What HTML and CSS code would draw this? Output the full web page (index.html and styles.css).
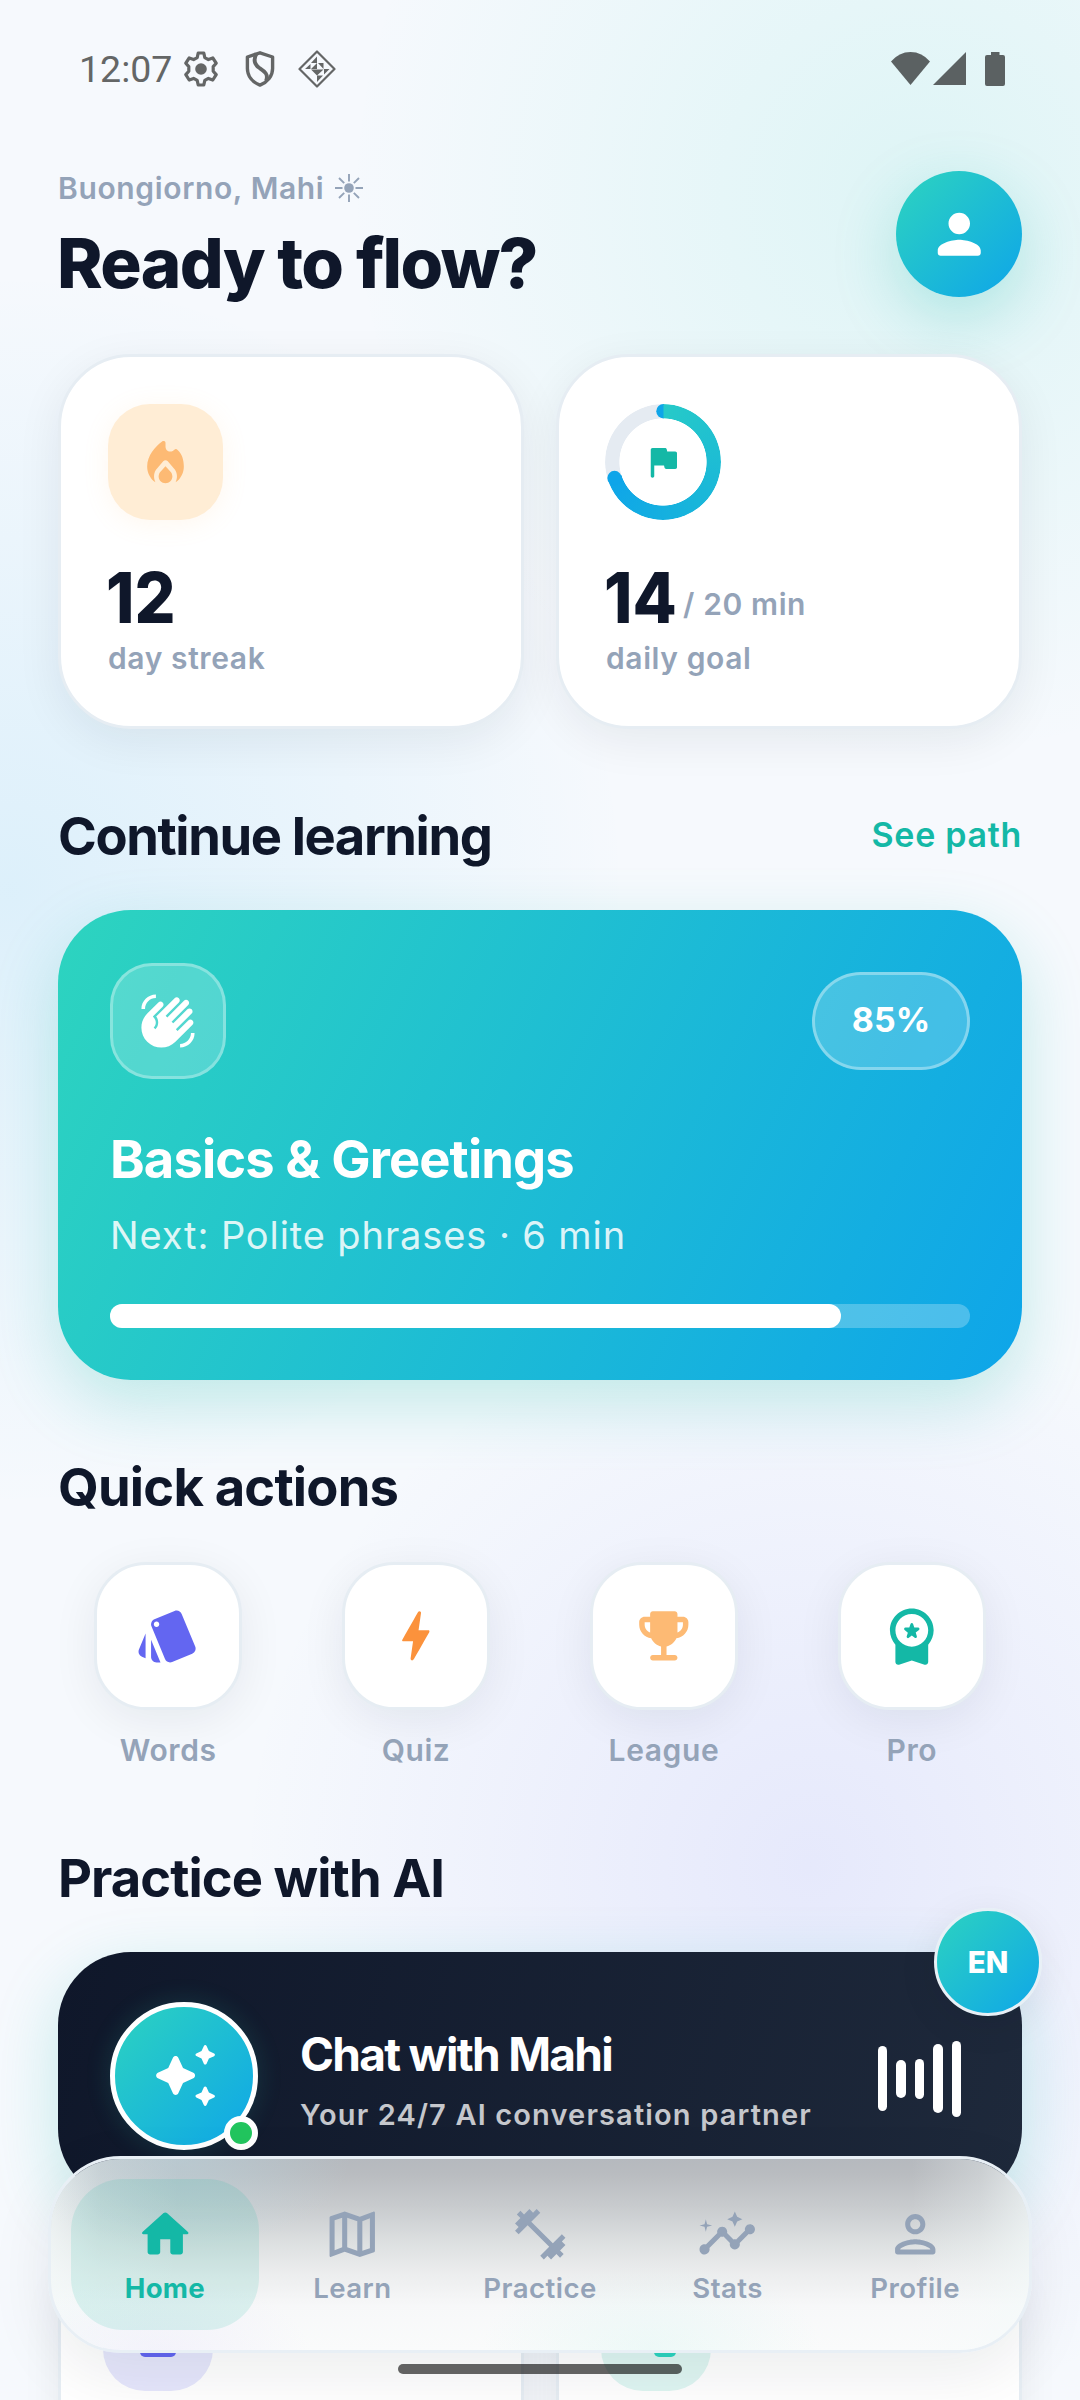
FILE: index.html
```html
<!DOCTYPE html>
<html lang="en">
<head>
<meta charset="utf-8">
<title>Home</title>
<link rel="stylesheet" href="styles.css">
</head>
<body>
<div class="screen">
  <header class="status">
    <span class="clock">12:07</span>
    <svg class="st-gear" viewBox="0 0 34 36"><path d="M14.2 2h5.6l1 4.600 3.600 2 4.400-1.600 3.400 5.200-3 3.400v4.600l3 3.400-3.400 5.400-4.400-1.600-3.600 2-1 4.600h-5.600l-1-4.600-3.600-2-4.400 1.600-3.400-5.400 3-3.400v-4.600l-3-3.400 3.400-5.200 4.400 1.600 3.600-2z" fill="none" stroke="#646666" stroke-width="3.200" stroke-linejoin="round"/><circle cx="17" cy="18" r="5.800" fill="#646666"/></svg>
    <svg class="st-shield" viewBox="0 0 30 36"><path d="M15 1.800 27.600 6v11.500c0 7.500-5 13.600-12.600 16.600C7.400 31.100 2.400 25 2.400 17.500V6z" fill="none" stroke="#646666" stroke-width="3.400" stroke-linejoin="round"/><path d="M11.500 2.500C8 9 10 14 14.500 17s9.500 6 6.500 13" fill="none" stroke="#646666" stroke-width="3.800"/></svg>
    <svg class="st-diamond" viewBox="0 0 38 38"><path d="M19 1.500 36.500 19 19 36.500 1.500 19z" fill="none" stroke="#646666" stroke-width="2.200" stroke-linejoin="round"/><g fill="#646666"><path d="M19 6.500V13h-6zM20 13h5.500v6zM19 13v6l-6 0zM12.500 14v5H7zM13 19.500h6v6zM19 19.500h6.500l-6.500 6zM26 19h5.500l-5.500 5.500zM19 25.500h6l-6 6.500z"/></g></svg>
    <span class="grow"></span>
    <svg class="st-wifi" viewBox="0 0 39 33"><path d="M0 9.500Q8 0 19.500 0T39 9.500L19.500 33z" fill="#5b6162"/></svg>
    <svg class="st-signal" viewBox="0 0 33 33"><path d="M0 33 33 0v33z" fill="#5b6162"/></svg>
    <svg class="st-battery" viewBox="0 0 20 34"><path d="M6 0h8.500v3H18q2 0 2 2v27q0 2-2 2H2q-2 0-2-2V5q0-2 2-2h4z" fill="#5b6162"/></svg>
  </header>

  <main class="content">
    <section class="hello">
      <div>
        <p class="greeting">Buongiorno, Mahi<svg class="sun" viewBox="0 0 28 28"><circle cx="14" cy="14" r="4.800" fill="#94a3b8"/><path d="M14 0v7.500M14 20.500V28M0 14h7.500M20.500 14H28M4 4l5.200 5.200M18.800 18.800 24 24M4 24l5.200-5.200M18.800 9.200 24 4" stroke="#94a3b8" stroke-width="1.900"/></svg></p>
        <h1>Ready to flow?</h1>
      </div>
      <div class="avatar"><svg viewBox="0 0 24 24"><path d="M12 12c2.210 0 4-1.790 4-4s-1.790-4-4-4-4 1.790-4 4 1.790 4 4 4zm0 2c-2.670 0-8 1.340-8 4v1c0 .55.45 1 1 1h14c.55 0 1-.45 1-1v-1c0-2.660-5.330-4-8-4z"/></svg></div>
    </section>

    <section class="stats">
      <article class="stat">
        <div class="flame"><svg viewBox="0 0 24 24"><path d="M16 6.300c-.5.500-1.100.900-2 .900-1.100 0-2-.9-2-2.200V3.400c0-.8-.9-1-1.500-.6C7.600 4.900 4 9 4 13.700c0 2.800 1.400 5.500 3.600 6.900-.4-.8-.6-1.700-.6-2.600 0-1.400.5-2.600 1.500-3.600l2.500-2.900c.6-.6 1.400-.6 2 0l2.500 2.900c1 1 1.500 2.200 1.500 3.600 0 .9-.2 1.800-.6 2.600 2.200-1.400 3.600-4.100 3.600-6.900 0-2.800-.8-5.300-2.600-7-.5-.7-1.100-.8-1.400-.4z"/><path d="M12 13.600l-2.100 2.300c-.6.600-.9 1.400-.9 2.200C9 19.700 10.300 21 12 21s3-1.300 3-2.900c0-.8-.3-1.600-.9-2.200z"/></svg></div>
        <p class="num"><b>12</b></p>
        <p class="label">day streak</p>
      </article>
      <article class="stat">
        <div class="ring">
          <svg class="caps" viewBox="0 0 116 116"><path d="M58.500 0a7.200 7.200 0 0 0 0 14.400z" fill="#0ea5e9"/><circle cx="9.500" cy="74" r="7.200" fill="#0ea5e9"/></svg>
          <svg class="flag" viewBox="0 0 24 24"><path d="M14.400 6l-.24-1.200c-.09-.46-.5-.8-.98-.8H6c-.55 0-1 .45-1 1v15c0 .55.45 1 1 1s1-.45 1-1v-6h5.600l.24 1.200c.09.47.5.8.98.8H19c.55 0 1-.45 1-1V7c0-.55-.45-1-1-1h-4.600z"/></svg>
        </div>
        <p class="num"><b>14</b><span>/ 20 min</span></p>
        <p class="label">daily goal</p>
      </article>
    </section>

    <div class="heading first"><h2 class="h-continue">Continue learning</h2><a class="link">See path</a></div>
    <section class="lesson">
      <div class="lesson-top">
        <div class="glass"><svg viewBox="0 0 24 24"><path d="M23 17c0 3.310-2.690 6-6 6v-1.500c2.480 0 4.500-2.020 4.500-4.500H23zM1 7c0-3.310 2.690-6 6-6v1.500C4.520 2.500 2.500 4.520 2.500 7H1zM8.010 4.320l-4.600 4.600c-3.220 3.220-3.220 8.450 0 11.670s8.450 3.220 11.670 0l7.070-7.070c.49-.49.49-1.280 0-1.770s-1.280-.49-1.770 0l-4.420 4.420-.71-.71 6.540-6.540c.49-.49.49-1.280 0-1.770s-1.280-.49-1.770 0l-5.830 5.830-.71-.71 6.890-6.890c.49-.49.49-1.280 0-1.770s-1.280-.49-1.770 0L11.710 10.500l-.69-.7 5.480-5.480c.49-.49.49-1.280 0-1.770s-1.280-.49-1.770 0l-7.620 7.620c1.220 1.570 1.110 3.840-.33 5.280l-.71-.71c1.170-1.170 1.170-3.070 0-4.240l-.35-.35 4.070-4.070c.49-.49.49-1.280 0-1.770-.5-.48-1.290-.48-1.780.01z"/></svg></div>
        <span class="percent">85%</span>
      </div>
      <h3>Basics &amp; Greetings</h3>
      <p class="next">Next: Polite phrases · 6 min</p>
      <div class="bar"><div class="fill" style="width:85%"></div></div>
    </section>

    <div class="heading quick"><h2 class="h-quick">Quick actions</h2></div>
    <section class="actions">
      <div class="action"><div class="tile"><svg viewBox="0 0 24 24" fill="#6366f1"><path d="M2.530 19.650l1.340.56v-9.030l-2.430 5.860c-.41 1.020.08 2.190 1.090 2.610zm19.500-3.700L17.070 3.980c-.31-.75-1.040-1.210-1.810-1.230-.26 0-.53.04-.79.15L7.100 5.950c-.75.31-1.210 1.030-1.230 1.800-.01.27.04.54.15.8l4.960 11.970c.31.76 1.050 1.220 1.830 1.230.26 0 .52-.05.77-.15l7.360-3.050c1.020-.42 1.510-1.590 1.090-2.600zM7.880 8.750c-.55 0-1-.45-1-1s.45-1 1-1 1 .45 1 1-.45 1-1 1zm-2 11c0 1.100.9 2 2 2h1.450l-3.450-8.340v6.340z"/></svg></div><p>Words</p></div>
      <div class="action"><div class="tile"><svg viewBox="0 0 24 24" fill="#fb923c"><path d="M10.670 21c-.35 0-.62-.31-.57-.66L11 14H7.500c-.88 0-.33-.75-.31-.78 1.260-2.230 3.150-5.530 5.650-9.930.1-.18.3-.29.5-.29.35 0 .62.31.57.66L13.010 10h3.510c.4 0 .62.19.4.66-3.290 5.740-5.200 9.090-5.750 10.050-.1.180-.290.290-.5.290z"/></svg></div><p>Quiz</p></div>
      <div class="action"><div class="tile"><svg viewBox="0 0 24 24" fill="#fdba74"><path d="M19 5h-2V4c0-.55-.45-1-1-1H8c-.55 0-1 .45-1 1v1H5c-1.100 0-2 .9-2 2v1c0 2.550 1.920 4.630 4.390 4.940.63 1.500 1.980 2.630 3.610 2.960V19H8c-.55 0-1 .45-1 1s.45 1 1 1h8c.55 0 1-.45 1-1s-.45-1-1-1h-3v-3.100c1.630-.33 2.980-1.460 3.610-2.960C19.080 12.630 21 10.550 21 8V7c0-1.100-.9-2-2-2zM5 8V7h2v3.820C5.840 10.400 5 9.300 5 8zm14 0c0 1.300-.84 2.400-2 2.820V7h2v1z"/></svg></div><p>League</p></div>
      <div class="action"><div class="tile"><svg viewBox="0 0 24 24" fill="#14b8a6"><path d="M10.920 12.750L12 11.930l1.070.81c.39.29.92-.08.78-.55l-.42-1.360 1.200-.95c.37-.29.16-.88-.32-.88h-1.400l-.43-1.330c-.15-.46-.8-.46-.95 0L11.090 9H9.680c-.47 0-.68.59-.31.89l1.190.95-.42 1.360c-.14.470.39.840.78.550zM6 21.610c0 .68.67 1.160 1.320.95L12 21l4.680 1.560c.65.22 1.320-.26 1.320-.95v-6.330c1.240-1.410 2-3.250 2-5.280 0-4.420-3.580-8-8-8s-8 3.580-8 8c0 2.030.76 3.870 2 5.280v6.330zM12 4c3.310 0 6 2.690 6 6s-2.690 6-6 6-6-2.690-6-6 2.690-6 6-6z"/></svg></div><p>Pro</p></div>
    </section>

    <div class="heading"><h2 class="h-practice">Practice with AI</h2></div>
    <section class="chat">
      <div class="bot">
        <svg viewBox="0 0 24 24"><path d="M19.460 8l.79-1.750L22 5.460c.39-.18.39-.73 0-.91l-1.750-.79L19.460 2c-.18-.39-.73-.39-.91 0l-.79 1.750L16 4.540c-.39.18-.39.73 0 .91l1.750.79L18.540 8c.18.39.74.39.92 0zM11.500 9.500L9.910 6c-.35-.78-1.470-.78-1.820 0L6.500 9.500 3 11.090c-.78.36-.78 1.470 0 1.820l3.500 1.590L8.090 18c.36.78 1.470.78 1.820 0l1.590-3.500 3.500-1.590c.78-.36.78-1.470 0-1.820L11.500 9.500zM18.540 16l-.79 1.750-1.750.79c-.39.18-.39.73 0 .91l1.750.79.79 1.760c.18.39.73.39.91 0l.79-1.750 1.760-.79c.39-.18.39-.73 0-.91l-1.750-.79L19.460 16c-.18-.39-.74-.39-.92 0z"/></svg>
        <i class="online"></i>
      </div>
      <div class="chat-text">
        <h3>Chat with Mahi</h3>
        <p>Your 24/7 AI conversation partner</p>
      </div>
      <div class="wave"><i class="w1"></i><i class="w2"></i><i class="w3"></i><i class="w4"></i><i class="w5"></i></div>
      <div class="lang">EN</div>
    </section>

    <section class="modes">
      <article class="mode"><div class="mode-icon violet"><i></i></div></article>
      <article class="mode"><div class="mode-icon teal"><i></i></div></article>
    </section>
  </main>

  <nav class="nav">
    <a class="item active"><svg viewBox="0 0 24 24"><path d="M10 19v-5h4v5c0 .55.45 1 1 1h3c.55 0 1-.45 1-1v-7h1.700c.46 0 .68-.57.33-.87L12.670 3.600c-.38-.34-.96-.34-1.340 0l-8.360 7.530c-.34.3-.13.87.33.87H5v7c0 .55.45 1 1 1h3c.55 0 1-.45 1-1z"/></svg><span>Home</span></a>
    <a class="item"><svg viewBox="0 0 24 24"><path fill-rule="evenodd" d="M20.500 3l-.16.03L15 5.100 9 3 3.360 4.900c-.21.07-.36.25-.36.48V20.500c0 .28.22.5.5.5l.16-.03L9 18.900l6 2.100 5.640-1.900c.21-.07.36-.25.36-.48V3.500c0-.28-.22-.5-.5-.5zM10 5.470l4 1.400v11.660l-4-1.400V5.470zm-5 .99l3-1.010v11.700l-3 1.160V6.460zm14 11.080l-3 1.010V6.860l3-1.160v11.840z"/></svg><span>Learn</span></a>
    <a class="item"><svg viewBox="0 0 24 24"><path d="M20.570 14.860L22 13.430 20.570 12 17 15.570 8.430 7 12 3.430 10.570 2 9.140 3.430 7.710 2 5.570 4.140 4.140 2.710 2.710 4.140l1.430 1.430L2 7.710l1.430 1.430L2 10.570 3.430 12 7 8.430 15.570 17 12 20.570 13.430 22l1.430-1.430L16.290 22l2.140-2.140 1.430 1.430 1.430-1.430-1.430-1.430L22 16.290z"/></svg><span>Practice</span></a>
    <a class="item"><svg viewBox="0 0 24 24"><path d="M21 8c-1.450 0-2.260 1.440-1.930 2.510l-3.550 3.560c-.3-.09-.74-.09-1.040 0l-2.550-2.550C12.270 10.450 11.460 9 10 9c-1.450 0-2.270 1.440-1.930 2.520l-4.560 4.550C2.440 15.740 1 16.550 1 18c0 1.100.9 2 2 2 1.450 0 2.260-1.440 1.930-2.510l4.550-4.560c.3.09.74.09 1.040 0l2.550 2.550C12.730 16.550 13.540 18 15 18c1.450 0 2.270-1.440 1.930-2.520l3.560-3.550c1.070.33 2.510-.48 2.510-1.930 0-1.100-.9-2-2-2zM15 9l.94-2.070L18 6l-2.060-.93L15 3l-.92 2.070L12 6l2.080.93zM3.500 11L4 9l2-.5L4 8l-.5-2L3 8l-2 .5L3 9z"/></svg><span>Stats</span></a>
    <a class="item"><svg viewBox="0 0 24 24"><path fill-rule="evenodd" d="M12 6c1.100 0 2 .9 2 2s-.9 2-2 2-2-.9-2-2 .9-2 2-2m0 10c2.700 0 5.800 1.290 6 2H6c.23-.72 3.310-2 6-2m0-12C9.790 4 8 5.790 8 8s1.790 4 4 4 4-1.790 4-4-1.790-4-4-4zm0 10c-2.670 0-8 1.340-8 4v1c0 .55.45 1 1 1h14c.55 0 1-.45 1-1v-1c0-2.660-5.330-4-8-4z"/></svg><span>Profile</span></a>
  </nav>
  <div class="gesture"></div>
</div>
</body>
</html>
```
FILE: styles.css
```css
* { box-sizing: border-box; }
body { margin: 0; font-family: Inter, "Noto Sans", sans-serif; }
h1, h2, h3, p { margin: 0; }
svg { display: block; flex: none; }

.screen {
  position: relative;
  width: 1080px;
  height: 2400px;
  overflow: hidden;
  background:
    radial-gradient(circle 570px at 918px 192px, rgba(45, 212, 191, .12), rgba(45, 212, 191, 0)),
    radial-gradient(circle 620px at 10px 890px, rgba(14, 165, 233, .11), rgba(14, 165, 233, 0)),
    radial-gradient(circle 570px at 811px 1865px, rgba(99, 102, 241, .11), rgba(99, 102, 241, 0)),
    #f6f9fd;
}

/* status bar */
.status { display: flex; align-items: center; height: 138px; padding: 0 75px 0 79px; }
.clock { width: 105px; font: 400 37.500px/44px Roboto, sans-serif; color: #646666; }
.st-gear { width: 34px; height: 36px; }
.st-shield { width: 30px; height: 36px; margin-left: 27px; }
.st-diamond { width: 38px; height: 38px; margin-left: 23px; }
.grow { flex: 1; }
.st-wifi { width: 39px; height: 33px; margin-bottom: 2px; }
.st-signal { width: 33px; height: 33px; margin-left: 3px; margin-bottom: 2px; }
.st-battery { width: 20px; height: 34px; margin-left: 19px; margin-bottom: 1px; }

.content { padding: 0 58px; }

/* greeting */
.hello { display: flex; justify-content: space-between; align-items: flex-start; height: 216px; padding-top: 30px; }
.greeting { display: flex; align-items: center; gap: 11px; height: 40px; font-size: 30px; line-height: 40px; font-weight: 600; letter-spacing: .64px; color: #94a3b8; }
.sun { width: 28px; height: 28px; }
h1 { margin: 13px 0 0 -1px; font-size: 69px; line-height: 84px; font-weight: 800; letter-spacing: -1.650px; color: #0f172a; white-space: nowrap; }
.avatar { display: flex; align-items: center; justify-content: center; width: 126px; height: 126px; margin-top: 3px; border-radius: 50%; background: linear-gradient(135deg, #2dd4bf, #0ea5e9); box-shadow: 0 21px 63px rgba(20, 184, 166, .25); }
.avatar svg { width: 64.500px; height: 64.500px; fill: #fff; }

/* stat cards */
.stats { display: grid; grid-template-columns: 1fr 1fr; gap: 32px; }
.stat { height: 375px; padding: 47px; border: 3px solid #e6edf3; border-radius: 73px; background: #fff; box-shadow: 0 12px 46px rgba(15, 23, 42, .07); }
.flame { display: flex; align-items: center; justify-content: center; width: 115px; height: 116px; border-radius: 42px; background: #ffedd5; box-shadow: 0 4px 26px rgba(253, 186, 116, .12); }
.flame svg { width: 55px; height: 55px; fill: #fdba74; }
.ring { position: relative; display: flex; align-items: center; justify-content: center; width: 116px; height: 116px; margin-left: -1px; }
.ring::before { content: ""; position: absolute; inset: 0; border-radius: 50%; background: conic-gradient(#26cac8 0deg, #0ea5e9 252deg, #e5ebf2 252deg); -webkit-mask: radial-gradient(circle, transparent 43.300px, #000 44px); mask: radial-gradient(circle, transparent 43.300px, #000 44px); }
.caps { position: absolute; inset: 0; width: 116px; height: 116px; }
.flag { position: relative; width: 42px; height: 42px; fill: #14b8a6; }
.num { display: flex; align-items: baseline; height: 80px; margin: 38px 0 0 -2px; font-size: 70px; line-height: 80px; color: #0f172a; }
.num b { font-weight: 800; transform: scaleX(.92); transform-origin: left; }
.num span { position: relative; top: -8px; font-size: 30px; font-weight: 600; letter-spacing: .600px; color: #94a3b8; }
.label { font-size: 30px; line-height: 40px; font-weight: 600; letter-spacing: .600px; color: #94a3b8; }

/* section headings */
.heading { display: flex; align-items: center; justify-content: space-between; height: 64px; margin: 76px 0 42px; }
.heading.first { margin-top: 75px; }
.heading.quick { margin: 75px 0 43px; }
h2 { font-size: 52.500px; line-height: 64px; font-weight: 700; color: #0f172a; }
.h-continue { letter-spacing: -1.400px; }
.h-quick { letter-spacing: -.800px; }
.h-practice { letter-spacing: -.950px; }
.link { padding-bottom: 4px; font-size: 34px; font-weight: 600; letter-spacing: .700px; color: #14b8a6; }

/* current lesson */
.lesson { height: 470px; padding: 53px 52px; border-radius: 73px; color: #fff; background: linear-gradient(116deg, #2dd4bf, #0ea5e9); box-shadow: 0 24px 66px rgba(20, 184, 166, .23); }
.lesson-top { display: flex; align-items: center; justify-content: space-between; }
.glass { display: flex; align-items: center; justify-content: center; width: 116px; height: 116px; border: 3px solid rgba(255, 255, 255, .3); border-radius: 42px; background: rgba(255, 255, 255, .2); }
.glass svg { width: 58px; height: 58px; fill: #fff; }
.percent { display: flex; align-items: center; justify-content: center; width: 158px; height: 98px; margin-bottom: 1px; padding-bottom: 2px; border: 3px solid rgba(255, 255, 255, .35); border-radius: 49px; background: rgba(255, 255, 255, .2); font-size: 34px; font-weight: 700; }
.lesson h3 { margin-top: 48px; font-size: 52.500px; line-height: 64px; font-weight: 700; letter-spacing: -.900px; }
.next { margin-top: 20px; font-size: 38px; line-height: 48px; font-weight: 400; letter-spacing: .900px; color: rgba(255, 255, 255, .86); }
.bar { margin-top: 45px; height: 23.500px; border-radius: 12px; background: rgba(255, 255, 255, .25); }
.fill { height: 100%; border-radius: 12px; background: #fff; }

/* quick actions */
.actions { display: grid; grid-template-columns: repeat(4, 1fr); gap: 27.500px; }
.action { display: flex; flex-direction: column; align-items: center; }
.tile { display: flex; align-items: center; justify-content: center; width: 148px; height: 148px; border: 3px solid #e6edf3; border-radius: 52px; background: #fff; box-shadow: 0 10px 46px rgba(15, 23, 42, .07); }
.tile svg { width: 65.600px; height: 65.600px; }
.action p { margin-top: 20px; font-size: 30px; line-height: 40px; font-weight: 600; letter-spacing: .600px; color: #94a3b8; }

/* chat card */
.chat { position: relative; display: flex; align-items: center; height: 250px; padding: 0 61px 0 52px; border-radius: 73px; background: linear-gradient(104.600deg, #0f172a, #1e293b); box-shadow: 0 21px 66px rgba(20, 184, 166, .22); }
.bot { position: relative; display: flex; align-items: center; justify-content: center; width: 148px; height: 148px; margin-bottom: 3px; border: 5px solid #fff; border-radius: 50%; background: linear-gradient(135deg, #2dd4bf, #0ea5e9); background-origin: border-box; box-shadow: 0 0 26px rgba(45, 212, 191, .15); }
.bot svg { width: 71px; height: 71px; fill: #fff; }
.online { position: absolute; right: -5px; bottom: -5px; width: 34px; height: 34px; border: 6.500px solid #fff; border-radius: 50%; background: #22c55e; }
.chat-text { flex: 1; margin: 6px 0 0 42px; }
.chat-text h3 { font-size: 46px; line-height: 56px; font-weight: 700; letter-spacing: -1.700px; color: #fff; }
.chat-text p { margin-top: 13px; font-size: 29px; line-height: 40px; font-weight: 600; letter-spacing: 1.140px; color: #c5c7cc; white-space: nowrap; }
.wave { display: flex; align-items: center; gap: 9px; margin-top: 3px; }
.wave i { width: 9.500px; border-radius: 5px; background: #fff; }
.w1 { height: 65px; }
.w2 { height: 38px; }
.w3 { height: 40px; }
.w4 { height: 69px; }
.w5 { height: 76px; }
.lang { position: absolute; right: -20px; top: -44px; display: flex; align-items: center; justify-content: center; width: 108px; height: 108px; padding-bottom: 1px; border: 3px solid #e8f0f6; border-radius: 50%; background: linear-gradient(135deg, #2dd4bf, #0ea5e9); background-origin: border-box; box-shadow: 0 8px 40px rgba(15, 23, 42, .08); font-size: 29.500px; font-weight: 800; color: #fff; }

/* practice modes */
.modes { display: grid; grid-template-columns: 1fr 1fr; gap: 32px; margin-top: 34px; }
.mode { height: 374px; padding: 42px; border: 3px solid #e6edf3; border-radius: 73px; background: #fff; box-shadow: 0 12px 42px rgba(15, 23, 42, .06); }
.mode-icon { display: flex; align-items: flex-end; justify-content: center; width: 110px; height: 110px; padding-bottom: 34px; border-radius: 42px; }
.mode-icon i { border-radius: 5px; height: 38px; }
.violet { background: #e6e7fc; }
.violet i { width: 36px; background: #6366f1; }
.teal { background: #dff6f2; }
.teal i { width: 22px; margin-left: 18px; background: #2dd4bf; }

.nav {
  position: absolute; left: 48px; top: 2156px; display: flex; width: 984px; height: 197px; padding: 20px;
  border: 3px solid #e8eff5; border-radius: 73px;
  background:
    radial-gradient(ellipse 170px 90px at 130px 0, rgba(190, 222, 232, .42), rgba(190, 222, 232, 0)),
    radial-gradient(ellipse 150px 80px at 110px 197px, rgba(226, 220, 250, .28), rgba(226, 220, 250, 0)),
    radial-gradient(ellipse 170px 90px at 600px 190px, rgba(205, 244, 238, .28), rgba(205, 244, 238, 0)),
    linear-gradient(90deg, rgba(244, 250, 250, .75), rgba(244, 250, 250, .3) 5%, rgba(244, 250, 250, 0) 13%, rgba(244, 250, 250, 0) 88%, rgba(244, 250, 250, .3) 95%, rgba(244, 250, 250, .7)),
    linear-gradient(#b5b9be, #b9bcc0 8%, #c8cbce 25%, #dcdfe0 43%, #ecedee 60%, #f7f8f9 77%, #fafbfb);
  background-clip: padding-box;
  box-shadow: 0 21px 63px rgba(15, 23, 42, .08);
}
.item { flex: 1; display: flex; flex-direction: column; align-items: center; padding-top: 25px; border-radius: 52px; color: #94a3b8; }
.item svg { width: 60.500px; height: 60.500px; fill: currentColor; }
.item span { margin-top: 6px; font-size: 27.600px; line-height: 34px; font-weight: 600; letter-spacing: .450px; }
.active { background: rgba(20, 184, 166, .13); color: #14b8a6; }
.active span { font-weight: 700; letter-spacing: .200px; }
.gesture { position: absolute; left: 398px; top: 2364px; width: 284px; height: 10px; border-radius: 5px; background: rgba(0, 0, 0, .6); }
```
